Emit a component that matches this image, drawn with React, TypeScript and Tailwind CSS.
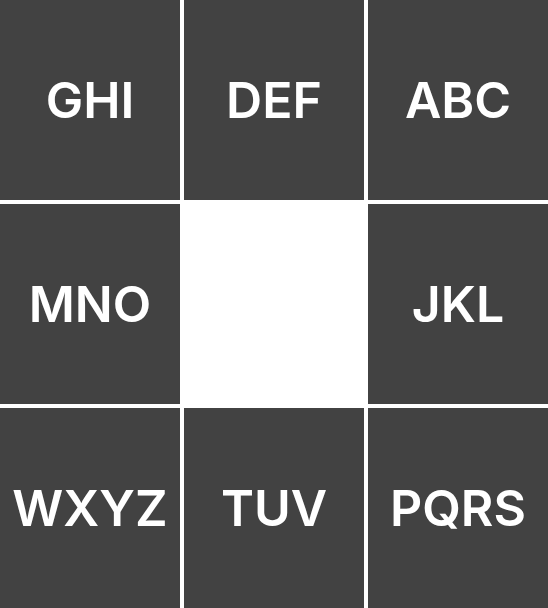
import React from 'react';

const cells: (string | null)[] = ['GHI', 'DEF', 'ABC', 'MNO', null, 'JKL', 'WXYZ', 'TUV', 'PQRS'];

export default function App() {
  return (
    <div className="w-[548px] h-[608px] bg-white grid grid-cols-[180px_180px_180px] grid-rows-[200px_200px_200px] gap-1 font-['Inter',sans-serif]">
      {cells.map((label, i) =>
        label ? (
          <div
            key={i}
            className="bg-[#424242] flex items-center justify-center text-white text-[50px] font-semibold leading-none"
          >
            {label}
          </div>
        ) : (
          <div key={i} className="bg-white" />
        )
      )}
    </div>
  );
}
